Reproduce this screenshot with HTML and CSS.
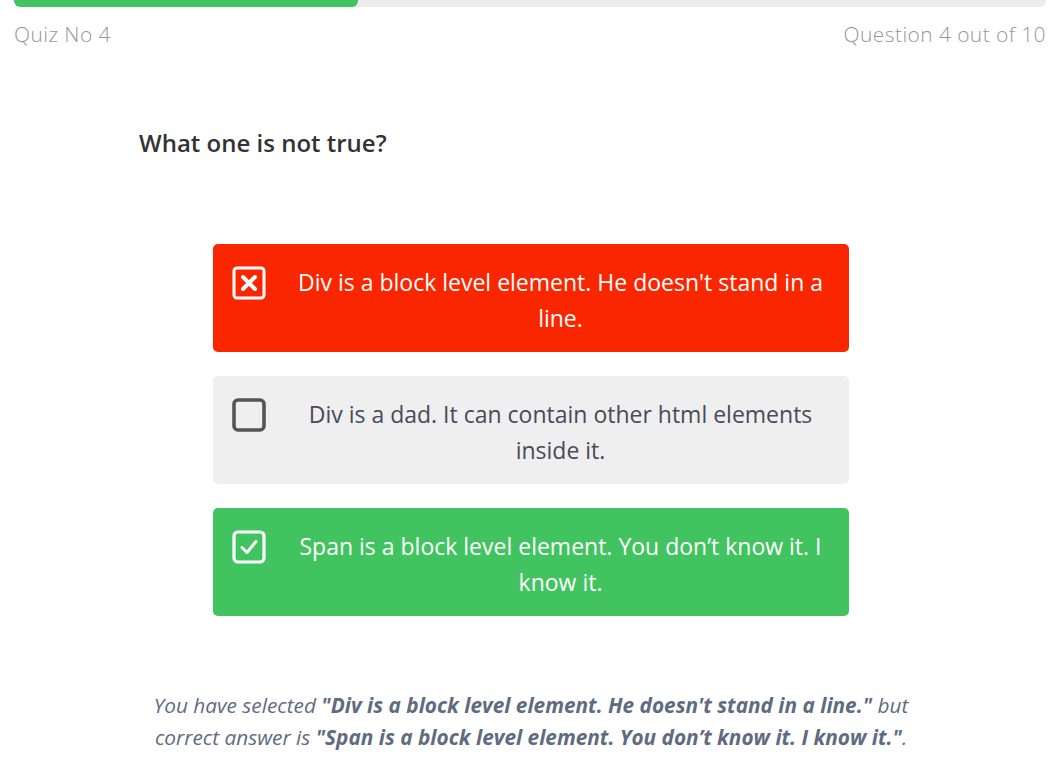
FILE: index.html
```html
<!DOCTYPE html>
<html>
<head>
<meta charset="utf-8">
<link rel="stylesheet" href="styles.css">
</head>
<body>
<div class="page">
  <div class="progress"><div class="progress-fill" style="width:33.3%"></div></div>
  <div class="meta">
    <span class="quiz-no">Quiz No 4</span>
    <span class="quiz-count">Question 4 out of 10</span>
  </div>
  <main class="content">
    <h2 class="question">What one is not true?</h2>
    <div class="options">
      <div class="option wrong">
        <span class="box">
          <svg viewBox="0 0 34 34" width="34" height="34"><rect x="2" y="2" width="30" height="30" rx="3" fill="none" stroke="#fff" stroke-width="3"/><path d="M11 11 L23 23 M23 11 L11 23" stroke="#fff" stroke-width="4" stroke-linecap="round"/></svg>
        </span>
        <span class="label">Div is a block level element. He doesn't stand in a line.</span>
      </div>
      <div class="option neutral">
        <span class="box">
          <svg viewBox="0 0 34 34" width="34" height="34"><rect x="2" y="2" width="30" height="30" rx="4" fill="none" stroke="#555" stroke-width="3.6"/></svg>
        </span>
        <span class="label">Div is a dad. It can contain other html elements inside it.</span>
      </div>
      <div class="option right">
        <span class="box">
          <svg viewBox="0 0 34 34" width="34" height="34"><rect x="2" y="2" width="30" height="30" rx="4" fill="none" stroke="#fff" stroke-width="3.2"/><path d="M10 17.5 L15 22.5 L24 11.5" fill="none" stroke="#fff" stroke-width="3" stroke-linecap="round" stroke-linejoin="round"/></svg>
        </span>
        <span class="label">Span is a block level element. You don’t know it. I know it.</span>
      </div>
    </div>
    <p class="result">You have selected <b>"Div is a block level element. He doesn't stand in a line."</b> but correct answer is <b>"Span is a block level element. You don’t know it. I know it."</b>.</p>
  </main>
</div>
</body>
</html>
```
FILE: styles.css
```css
html, body {
  margin: 0;
  padding: 0;
  background: #fff;
}
.page {
  padding: 0 13px 0 14px;
}
.progress {
  height: 7px;
  background: #ececec;
  border-radius: 0 0 6px 6px;
  overflow: hidden;
}
.progress-fill {
  height: 100%;
  background: #41c45f;
  border-radius: 0 0 6px 6px;
}
.meta {
  display: flex;
  justify-content: space-between;
  margin-top: 13px;
  font-family: "Open Sans", "Lato", sans-serif;
  font-weight: 300;
  font-size: 21px;
  line-height: 28px;
  letter-spacing: 0.4px;
  color: #979797;
}
.content {
  width: 784px;
  margin-left: 125px;
  font-family: "Open Sans", "Noto Sans", sans-serif;
}
.question {
  margin: 79px 0 0 0;
  font-size: 24px;
  line-height: 32px;
  font-weight: 600;
  color: #333;
}
.options {
  width: 636px;
  margin: 85px auto 0;
  display: flex;
  flex-direction: column;
  gap: 24px;
}
.option {
  display: flex;
  align-items: flex-start;
  border-radius: 5px;
  padding: 20px 16px 16px 19px;
  min-height: 72px;
  font-size: 23px;
  line-height: 36px;
}
.box {
  flex: none;
  width: 34px;
  height: 34px;
  margin-top: 2px;
}
.box svg {
  display: block;
}
.label {
  flex: 1;
  text-align: center;
  padding-left: 22px;
}
.wrong {
  background: #fa2600;
  color: #fff;
}
.neutral {
  background: #efefef;
  color: #4a4a5a;
}
.right {
  background: #41c45f;
  color: #fff;
}
.result {
  margin: 73px 0 0 0;
  text-align: center;
  font-style: italic;
  font-size: 20.8px;
  line-height: 32px;
  color: #5f6b80;
}
.result b {
  font-weight: 700;
}
```
